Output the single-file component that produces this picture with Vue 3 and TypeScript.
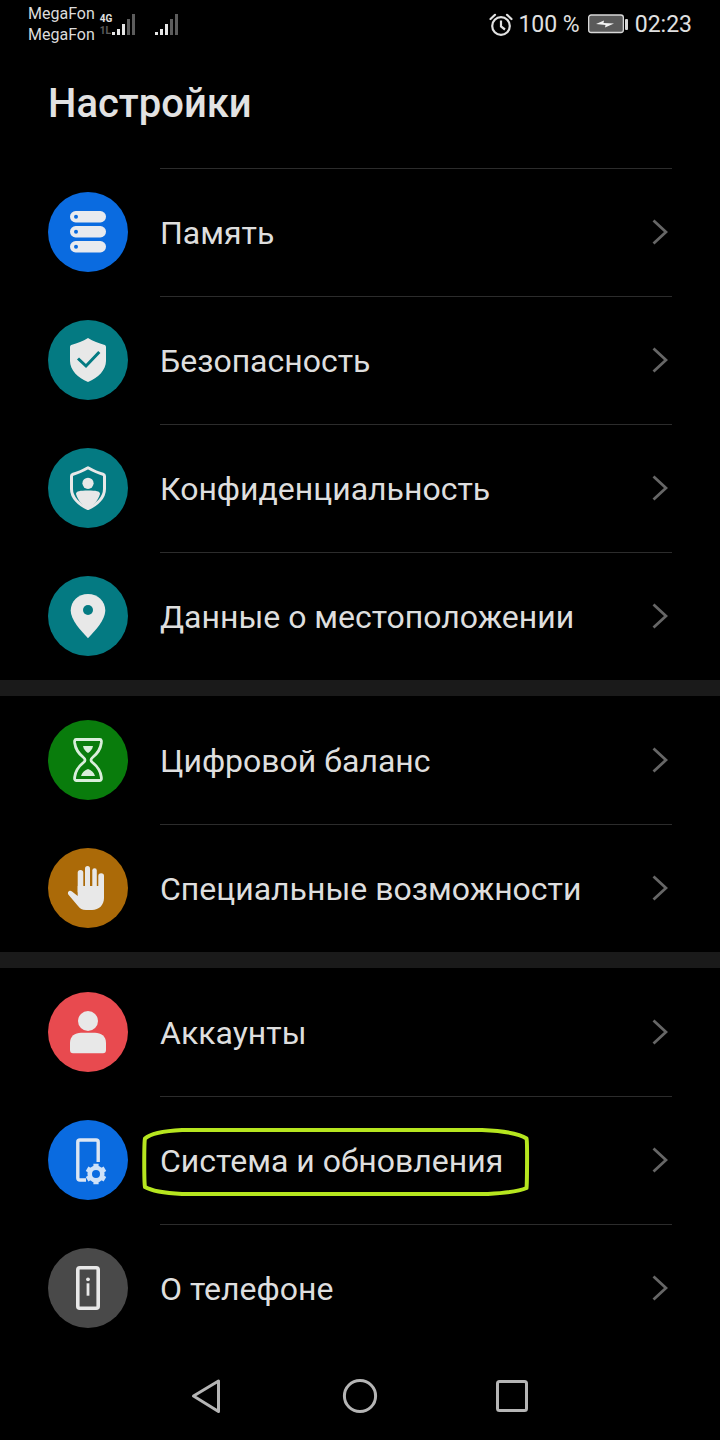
<script setup lang="ts">
interface Row {
  icon: string
  label: string
  color: string
}

const groups: { rows: Row[]; topLine: boolean }[] = [
  {
    topLine: true,
    rows: [
      { icon: 'storage', label: 'Память', color: '#0a6be0' },
      { icon: 'security', label: 'Безопасность', color: '#047a82' },
      { icon: 'privacy', label: 'Конфиденциальность', color: '#047a82' },
      { icon: 'location', label: 'Данные о местоположении', color: '#047a82' },
    ],
  },
  {
    topLine: false,
    rows: [
      { icon: 'balance', label: 'Цифровой баланс', color: '#097c0c' },
      { icon: 'access', label: 'Специальные возможности', color: '#ab6a08' },
    ],
  },
  {
    topLine: false,
    rows: [
      { icon: 'account', label: 'Аккаунты', color: '#e84a4f' },
      { icon: 'system', label: 'Система и обновления', color: '#0a6be0' },
      { icon: 'about', label: 'О телефоне', color: '#494949' },
    ],
  },
]

const bars = [
  { x: 0, h: 3, o: 1 },
  { x: 5, h: 6, o: 1 },
  { x: 10, h: 11, o: 1 },
  { x: 15, h: 16, o: 0.4 },
  { x: 20, h: 21, o: 0.4 },
]
</script>

<template>
  <div class="screen">
    <div class="status">
      <div class="carriers">
        <span>MegaFon</span>
        <span>MegaFon</span>
      </div>
      <div class="net">
        <span class="net-top">4G</span>
        <span class="net-bottom">1L</span>
      </div>
      <svg class="signal" width="24" height="22" viewBox="0 0 24 22">
        <rect v-for="b in bars" :key="b.x" :x="b.x" :y="22 - b.h" width="3" :height="b.h" fill="#e6e6e6" :opacity="b.o" />
      </svg>
      <svg class="signal second" width="24" height="22" viewBox="0 0 24 22">
        <rect v-for="b in bars" :key="b.x" :x="b.x" :y="22 - b.h" width="3" :height="b.h" fill="#e6e6e6" :opacity="b.o" />
      </svg>
      <div class="spacer"></div>
      <svg class="alarm" width="24" height="24" viewBox="0 0 24 24" fill="none" stroke="#e2e2e2" stroke-width="2.2">
        <circle cx="12" cy="13" r="8.8" />
        <path d="M12 7.5V13.5L16 16.5" />
        <path d="M1.5 6L6 1.8M22.5 6L18 1.8" stroke-linecap="round" />
      </svg>
      <span class="pct">100 %</span>
      <svg class="battery" width="37" height="20" viewBox="0 0 37 20">
        <rect x="0.65" y="1" width="34.7" height="17.5" rx="2.5" fill="#5a5a5a" stroke="#d8d8d8" stroke-width="1.3" />
        <path d="M8 10L16 6.5L15.5 9L26 9.5L17 13.5L17.5 11Z" fill="#f4f4f4" />
      </svg>
      <i class="battery-cap"></i>
      <span class="time">02:23</span>
    </div>

    <h1 class="title">Настройки</h1>

    <section v-for="(group, g) in groups" :key="g" class="group" :class="{ 'has-top': group.topLine }">
      <div v-for="row in group.rows" :key="row.label" class="row">
        <div class="badge" :style="{ background: row.color }">
          <svg width="80" height="80" viewBox="0 0 80 80">
            <g v-if="row.icon === 'storage'" fill="#e8eaee">
              <rect x="22" y="19" width="36" height="11.4" rx="5.7" />
              <rect x="22" y="34" width="36" height="11.4" rx="5.7" />
              <rect x="22" y="49" width="36" height="11.4" rx="5.7" />
              <circle cx="28" cy="24.7" r="2" :fill="row.color" />
              <circle cx="28" cy="39.7" r="2" :fill="row.color" />
              <circle cx="28" cy="54.7" r="2" :fill="row.color" />
            </g>
            <g v-else-if="row.icon === 'security'">
              <path d="M40 18C45 21 51 23.5 56 24.8C57.2 25 58 26 58 27V41C58 50 50 58 40 62C30 58 22 50 22 41V27C22 26 22.8 25 24 24.8C29 23.5 35 21 40 18Z" fill="#e8e8e8" />
              <path d="M30 38.5L38 46L51.3 32" fill="none" :stroke="row.color" stroke-width="3" />
            </g>
            <g v-else-if="row.icon === 'privacy'">
              <path d="M40 19.7C45 22.5 50.5 25 55 26.2C56 26.5 56.5 27 56.5 28V41C56.5 49.5 49 57 40 60.5C31 57 23.5 49.5 23.5 41V28C23.5 27 24 26.5 25 26.2C29.5 25 35 22.5 40 19.7Z" fill="none" stroke="#e8e8e8" stroke-width="3" stroke-linejoin="round" />
              <circle cx="40" cy="35.3" r="5.6" fill="#e8e8e8" />
              <path d="M28 46C28 43 32 42.5 40 42.5C48 42.5 52 43 52 46C50 53 45 58 40 60C35 58 30 53 28 46Z" fill="#e8e8e8" />
            </g>
            <g v-else-if="row.icon === 'location'">
              <path d="M40 18C49.8 18 57.3 25.2 57.3 34.6C57.3 44 47 55 40 62.3C33 55 22.7 44 22.7 34.6C22.7 25.2 30.2 18 40 18Z" fill="#e8e8e8" />
              <circle cx="40" cy="34" r="5" :fill="row.color" />
            </g>
            <g v-else-if="row.icon === 'balance'">
              <path d="M28 19.5H52C53.5 19.5 53.5 21 53.3 23C52.5 29.5 49.5 33.5 44.5 37.5C42.5 39 42.5 41 44.5 42.5C49.5 46.5 52.5 50.5 53.3 57C53.5 59 53.5 60.5 52 60.5H28C26.5 60.5 26.5 59 26.7 57C27.5 50.5 30.5 46.5 35.5 42.5C37.5 41 37.5 39 35.5 37.5C30.5 33.5 27.5 29.5 26.7 23C26.5 21 26.5 19.5 28 19.5Z" fill="none" stroke="#d9eedb" stroke-width="2.8" stroke-linejoin="round" />
              <path d="M35 26H45C44.5 29 42.5 31.5 40 33C37.5 31.5 35.5 29 35 26Z" fill="#d9eedb" />
              <path d="M33 56C34 52.5 37 50 40 49C43 50 46 52.5 47 56Z" fill="#d9eedb" />
            </g>
            <g v-else-if="row.icon === 'access'" fill="#e8e8e8">
              <rect x="29.7" y="22" width="5.6" height="24" rx="2.8" />
              <rect x="37" y="18" width="5" height="24" rx="2.5" />
              <rect x="44.3" y="20.3" width="4.5" height="22" rx="2.2" />
              <rect x="50.3" y="25.3" width="5.7" height="20" rx="2.8" />
              <path d="M29.7 38H56V50C56 57 51 62 44 62H38C34 62 32 60.5 30 58L20.7 47C18.5 44.5 21.5 41.5 24 43.5L29.7 48Z" />
            </g>
            <g v-else-if="row.icon === 'account'" fill="#e8e8e8">
              <circle cx="40" cy="29" r="10" />
              <path d="M22 51C22 44 27 40.7 33 40.7H47C53 40.7 58 44 58 51V58C58 60 57 61.3 55 61.3H25C23 61.3 22 60 22 58Z" />
            </g>
            <g v-else-if="row.icon === 'system'">
              <path d="M38 60H32C30.5 60 29.8 59.2 29.8 58V22C29.8 20.8 30.5 20 32 20H48C49.5 20 50.2 20.8 50.2 22V42" fill="none" stroke="#dde6f2" stroke-width="3.4" />
              <g transform="translate(48 54)" fill="#cfe2f8">
                <circle r="6.3" fill="none" stroke="#cfe2f8" stroke-width="4.6" />
                <path v-for="a in [0, 60, 120]" :key="a" :transform="`rotate(${a})`" d="M-2.6 -10.3H2.6V-7H-2.6ZM-2.6 10.3H2.6V7H-2.6Z" />
              </g>
            </g>
            <g v-else-if="row.icon === 'about'">
              <rect x="29.8" y="19.8" width="20.4" height="40.4" rx="2" fill="none" stroke="#e8e8e8" stroke-width="3.6" />
              <circle cx="40" cy="31.3" r="1.9" fill="#e8e8e8" />
              <rect x="38.6" y="35.3" width="2.8" height="12.4" fill="#e8e8e8" />
            </g>
          </svg>
        </div>
        <div class="row-body">
          <span class="label">{{ row.label }}</span>
          <svg class="chevron" width="16" height="26" viewBox="0 0 16 26" fill="none" stroke="#666" stroke-width="2.8">
            <path d="M1.5 1.5L14 13L1.5 24.5" />
          </svg>
        </div>
      </div>
    </section>

    <nav class="nav">
      <svg width="44" height="44" viewBox="0 0 44 44" fill="none" stroke="#b5b5b5" stroke-width="3" stroke-linejoin="round">
        <path d="M7.5 22L32.5 7V37.5Z" />
      </svg>
      <svg width="44" height="44" viewBox="0 0 44 44" fill="none" stroke="#b5b5b5" stroke-width="3">
        <circle cx="22" cy="22" r="15.6" />
      </svg>
      <svg width="44" height="44" viewBox="0 0 44 44" fill="none" stroke="#b5b5b5" stroke-width="3">
        <rect x="7.5" y="7.5" width="29" height="29" rx="2" />
      </svg>
    </nav>

    <svg class="annotation" width="388" height="70" viewBox="0 0 388 70" fill="none" stroke="#b6e61f" stroke-width="4">
      <path d="M40 3H340C362 4 378 7 384.5 11.5C385.5 14 385 58 384.5 61C378 64 365 66 346 67H40C22 66 8 63 3 60C2 56 2 15 3 11.5C8 7 22 4 40 3Z" />
    </svg>
  </div>
</template>

<style>
html, body {
  background: #000;
}
</style>

<style scoped>
.screen {
  position: relative;
  width: 720px;
  height: 1440px;
  overflow: hidden;
  background: #000;
  color: #e0e0e0;
  font-family: Roboto, "Liberation Sans", sans-serif;
}
.status {
  display: flex;
  align-items: center;
  height: 48px;
  padding: 0 28px;
}
.carriers {
  display: flex;
  flex-direction: column;
  font-size: 16px;
  line-height: 21px;
  color: #dcdcdc;
}
.net {
  display: flex;
  flex-direction: column;
  width: 13px;
  margin-left: 5px;
  margin-top: 2px;
  font-size: 10px;
  font-weight: 700;
  line-height: 12px;
}
.net-bottom {
  opacity: 0.4;
}
.signal {
  align-self: flex-start;
  margin: 13px 0 0 -1px;
}
.second {
  margin-left: 19px;
}
.spacer {
  flex: 1;
}
.alarm {
  margin-top: 1px;
}
.pct {
  margin-left: 5px;
  font-size: 23px;
}
.battery {
  margin-left: 8px;
}
.battery-cap {
  width: 3px;
  height: 11px;
  border-radius: 1px;
  background: #d8d8d8;
}
.time {
  margin-left: 7px;
  font-size: 23px;
}
.title {
  height: 120px;
  margin: 0;
  padding: 32px 0 0 48px;
  box-sizing: border-box;
  font-size: 40px;
  font-weight: 500;
  line-height: 48px;
  color: #e2e2e2;
}
.group + .group {
  border-top: 16px solid #1a1a1a;
}
.row {
  display: flex;
  align-items: center;
  height: 128px;
  padding: 0 48px;
}
.badge {
  flex: none;
  width: 80px;
  height: 80px;
  border-radius: 50%;
}
.badge svg {
  display: block;
}
.row-body {
  display: flex;
  flex: 1;
  align-items: center;
  justify-content: space-between;
  align-self: stretch;
  margin-left: 32px;
  border-top: 1px solid #2c2c2c;
  padding-right: 4px;
}
.group:not(.has-top) .row:first-child .row-body {
  border-top-color: transparent;
}
.label {
  font-size: 32px;
  color: #dedede;
}
.chevron {
  margin-top: -2px;
}
.nav {
  display: flex;
  justify-content: center;
  gap: 108px;
  padding-top: 22px;
}
.annotation {
  position: absolute;
  left: 142px;
  top: 1127px;
}
</style>
